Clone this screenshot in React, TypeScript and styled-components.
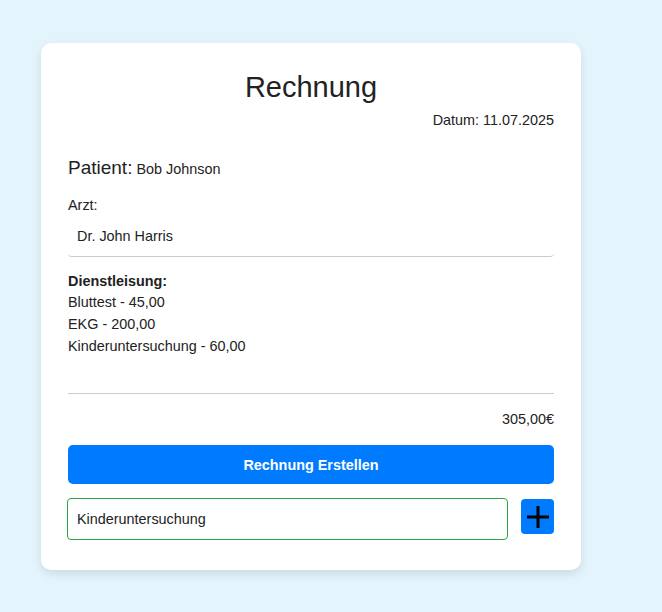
import React from "react";
import styled, { createGlobalStyle } from "styled-components";

const GlobalStyle = createGlobalStyle`
  html, body {
    margin: 0;
    padding: 0;
    background: #e3f4fd;
    font-family: "Liberation Sans", Arial, sans-serif;
    color: #222;
  }
  * { box-sizing: border-box; }
`;

const Page = styled.div`
  min-height: 612px;
  padding: 43px 0 0 41px;
`;

const Card = styled.div`
  width: 540px;
  background: #fff;
  border-radius: 10px;
  box-shadow: 0 4px 10px rgba(0, 0, 0, 0.1);
  padding: 28px 27px 30px 27px;
  display: flex;
  flex-direction: column;
`;

const Title = styled.h2`
  margin: 0;
  font-size: 29px;
  line-height: 32px;
  font-weight: 400;
  text-align: center;
  color: #222;
`;

const DateLine = styled.div`
  margin-top: 9px;
  font-size: 14.4px;
  line-height: 16px;
  text-align: right;
`;

const PatientRow = styled.div`
  margin-top: 29px;
  line-height: 22px;
  font-size: 14.4px;
`;

const PatientLabel = styled.span`
  font-size: 19px;
`;

const Label = styled.div`
  margin-top: 17px;
  font-size: 14.4px;
  line-height: 16px;
`;

const DoctorField = styled.div`
  margin-top: 9px;
  padding: 6px 9px 12px;
  font-size: 14.4px;
  line-height: 16px;
  border-bottom: 1px solid #ccc;
  border-radius: 4px;
`;

const Services = styled.div`
  margin-top: 13px;
  font-size: 14.4px;
  line-height: 22px;
`;

const ServicesTitle = styled.div`
  font-weight: 700;
  margin-bottom: -1px;
`;

const Divider = styled.hr`
  margin: 36px 0 0;
  border: none;
  border-top: 1px solid #ccc;
  height: 0;
`;

const Total = styled.div`
  margin-top: 17px;
  font-size: 14.4px;
  line-height: 16px;
  text-align: right;
`;

const PrimaryButton = styled.button`
  margin-top: 18px;
  height: 39px;
  width: 100%;
  border: none;
  border-radius: 5px;
  background: #007bff;
  color: #fff;
  font-family: "Liberation Sans", Arial, sans-serif;
  font-size: 14.4px;
  font-weight: 700;
  cursor: pointer;
`;

const AddRow = styled.div`
  margin-top: 14px;
  display: flex;
  align-items: flex-start;
  gap: 13px;
`;

const ServiceInput = styled.input`
  flex: 1;
  height: 42px;
  margin-left: -1px;
  border: 1px solid #28a745;
  border-radius: 4px;
  padding: 0 9px;
  font-family: "Liberation Sans", Arial, sans-serif;
  font-size: 14.4px;
  color: #222;
  outline: none;
`;

const PlusButton = styled.button`
  margin-top: 1px;
  width: 33px;
  height: 35px;
  border: none;
  border-radius: 4px;
  background: #007bff;
  display: flex;
  align-items: center;
  justify-content: center;
  padding: 0;
  cursor: pointer;
`;

export default function App() {
  return (
    <>
      <GlobalStyle />
      <Page>
        <Card>
          <Title>Rechnung</Title>
          <DateLine>Datum: 11.07.2025</DateLine>
          <PatientRow>
            <PatientLabel>Patient:</PatientLabel> Bob Johnson
          </PatientRow>
          <Label>Arzt:</Label>
          <DoctorField>Dr. John Harris</DoctorField>
          <Services>
            <ServicesTitle>Dienstleisung:</ServicesTitle>
            <div>Bluttest - 45,00</div>
            <div>EKG - 200,00</div>
            <div>Kinderuntersuchung - 60,00</div>
          </Services>
          <Divider />
          <Total>305,00€</Total>
          <PrimaryButton>Rechnung Erstellen</PrimaryButton>
          <AddRow>
            <ServiceInput defaultValue="Kinderuntersuchung" />
            <PlusButton aria-label="Hinzufügen">
              <svg width="22" height="22" viewBox="0 0 22 22">
                <path d="M11 0 V22 M0 11 H22" stroke="#000" strokeWidth="3" fill="none" />
              </svg>
            </PlusButton>
          </AddRow>
        </Card>
      </Page>
    </>
  );
}
